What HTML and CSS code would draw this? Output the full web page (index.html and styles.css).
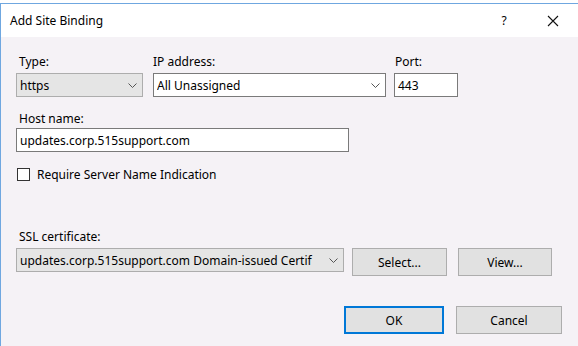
FILE: index.html
```html
<!DOCTYPE html>
<html>
<head>
<meta charset="utf-8">
<link rel="stylesheet" href="styles.css">
</head>
<body>
<div class="window">
  <div class="titlebar">
    <span class="title">Add Site Binding</span>
    <span class="help">?</span>
    <span class="close"><svg width="12" height="12" viewBox="0 0 12 12"><path d="M1 1 L11 11 M11 1 L1 11" stroke="#111" stroke-width="1.1" fill="none"/></svg></span>
  </div>
  <div class="content">
    <div class="row1">
      <div class="field f-type">
        <div class="label">Type:</div>
        <div class="select gray"><span class="val">https</span><svg class="chev" width="9" height="5" viewBox="0 0 9 5"><path d="M0.5 0.5 L4.5 4.5 L8.5 0.5" stroke="#555" fill="none"/></svg></div>
      </div>
      <div class="field f-ip">
        <div class="label">IP address:</div>
        <div class="select white"><span class="val">All Unassigned</span><svg class="chev" width="9" height="5" viewBox="0 0 9 5"><path d="M0.5 0.5 L4.5 4.5 L8.5 0.5" stroke="#555" fill="none"/></svg></div>
      </div>
      <div class="field f-port">
        <div class="label">Port:</div>
        <div class="input">443</div>
      </div>
    </div>
    <div class="field f-host">
      <div class="label">Host name:</div>
      <div class="input">updates.corp.515support.com</div>
    </div>
    <div class="check"><span class="box"></span><span>Require Server Name Indication</span></div>
    <div class="field f-ssl">
      <div class="label">SSL certificate:</div>
      <div class="ssl-row">
        <div class="select gray ssl-select"><span class="val">updates.corp.515support.com Domain-issued Certif</span><svg class="chev" width="9" height="5" viewBox="0 0 9 5"><path d="M0.5 0.5 L4.5 4.5 L8.5 0.5" stroke="#555" fill="none"/></svg></div>
        <div class="btn b-select">Select...</div>
        <div class="btn b-view">View...</div>
      </div>
    </div>
    <div class="actions">
      <div class="btn primary b-ok">OK</div>
      <div class="btn b-cancel">Cancel</div>
    </div>
  </div>
</div>
</body>
</html>
```

FILE: styles.css
```css
* { box-sizing: border-box; }
html, body { margin: 0; padding: 0; background: #ffffff; }
body {
  font-family: "Noto Sans", "Open Sans", sans-serif;
  font-size: 12px;
  color: #000;
  width: 578px;
  height: 346px;
  overflow: hidden;
}
.window {
  margin-top: 3px;
  border-top: 1px solid #6fa7e0;
  border-left: 1px solid #6fa7e0;
  height: 343px;
  display: flex;
  flex-direction: column;
}
.titlebar {
  height: 33px;
  background: #ffffff;
  display: flex;
  align-items: center;
  padding-left: 9px;
}
.title { font-size: 12px; flex: 1; }
.help { width: 20px; margin-right: 33px; font-size: 12px; text-align: center; }
.close { width: 12px; height: 12px; margin-right: 19px; display: flex; }
.content {
  flex: 1;
  background: #f5f2f6;
  padding: 17px 16px 0 15px;
  display: flex;
  flex-direction: column;
}
.label {
  line-height: 16px;
  height: 16px;
  padding-left: 3px;
  margin-bottom: 3px;
}
.row1 { display: flex; }
.f-type { width: 127px; margin-right: 10px; }
.f-ip { width: 233px; margin-right: 8px; }
.f-ip .label { padding-left: 0; }
.f-port { width: 64px; }
.f-port .label { padding-left: 1px; }
.select, .input {
  height: 24px;
  display: flex;
  align-items: center;
  padding-left: 3px;
  white-space: nowrap;
  overflow: hidden;
}
.select .val { flex: 1; overflow: hidden; }
.chev { margin-right: 5px; flex: none; }
.gray { background: #e5e5e5; border: 1px solid #adadad; }
.white { background: #ffffff; border: 1px solid #7a7a7a; }
.input { background: #ffffff; border: 1px solid #7a7a7a; }
.f-host { margin-top: 14px; width: 333px; }
.f-host .label { margin-bottom: 1px; }
.check {
  margin-top: 14px;
  display: flex;
  align-items: center;
  height: 16px;
  padding-left: 1px;
}
.box {
  width: 13px;
  height: 13px;
  border: 1px solid #333;
  background: #fff;
  margin-right: 7px;
}
.f-ssl { margin-top: 47px; }
.ssl-row { display: flex; align-items: flex-start; }
.ssl-select { width: 328px; margin-right: 8px; }
.btn {
  height: 28px;
  background: #e1e1e1;
  border: 1px solid #adadad;
  display: flex;
  align-items: center;
  justify-content: center;
}
.b-select { width: 95px; margin-right: 11px; }
.b-view { width: 94px; }
.actions {
  margin-top: 30px;
  display: flex;
  justify-content: flex-end;
}
.primary { border: 2px solid #0078d7; }
.b-ok { width: 100px; height: 28px; margin-right: 12px; }
.b-cancel { width: 106px; height: 28px; }
```
